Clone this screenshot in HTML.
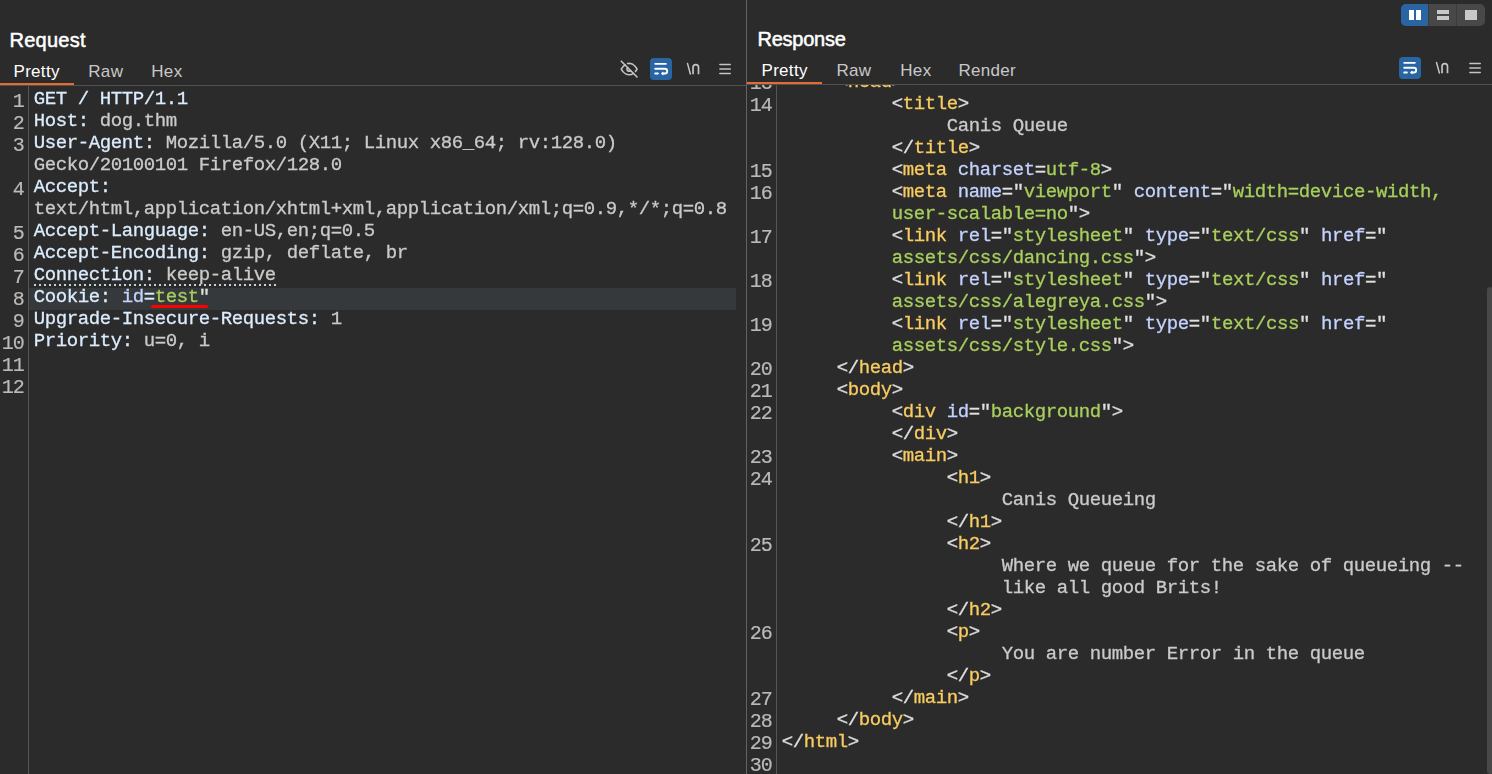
<!DOCTYPE html>
<html><head><meta charset="utf-8">
<style>
*{margin:0;padding:0;box-sizing:border-box}
html,body{width:1492px;height:774px;overflow:hidden;background:#2b2b2b}
body{position:relative;font-family:"Liberation Sans",sans-serif;color:#ddd}
.a{position:absolute}
.title{font-weight:normal;font-size:20px;color:#fff;line-height:20px;white-space:nowrap;-webkit-text-stroke:0.5px #fff}
.tab{font-size:17px;letter-spacing:0.3px;color:#c8c8c8;line-height:18px;white-space:nowrap}
.tab.sel{color:#fff}
.code{font-family:"Liberation Mono",monospace;font-size:19px;letter-spacing:-0.4px;line-height:22px;white-space:pre;color:#cacaca;-webkit-text-stroke:0.3px currentColor}
.ln{font-family:"Liberation Mono",monospace;font-size:20px;letter-spacing:-1px;line-height:22px;color:#bababa;text-align:right;white-space:pre;-webkit-text-stroke:0.2px currentColor}
.h{color:#dbecfd}
.t{color:#f8cc60}
.n{color:#c3d2ff}
.v{color:#a8cf5c}
.q{color:#e0e0e0}
.clip{position:absolute;overflow:hidden;will-change:transform}

</style></head><body>
<div class="a" style="left:746px;top:0;width:1px;height:774px;background:#636363"></div>

<div class="a title" style="left:9.5px;top:30px;letter-spacing:0.25px">Request</div>
<div class="a tab sel" style="left:13.5px;top:63px">Pretty</div>
<div class="a tab" style="left:88.3px;top:63px">Raw</div>
<div class="a tab" style="left:151.3px;top:63px">Hex</div>
<div class="a" style="left:0;top:83px;width:74px;height:2px;background:#e66b32"></div>
<div class="a" style="left:0;top:85px;width:746px;height:1px;background:#505050"></div>


<svg class="a" style="left:616px;top:56px" width="26" height="26" viewBox="0 0 26 26">
<g transform="translate(4.6 4.5) scale(0.715)" fill="none" stroke="#c4c4c4" stroke-width="2.25" stroke-linecap="round" stroke-linejoin="round">
<path d="M17.94 17.94A10.07 10.07 0 0 1 12 20c-7 0-11-8-11-8a18.45 18.45 0 0 1 5.06-5.94M9.9 4.24A9.12 9.12 0 0 1 12 4c7 0 11 8 11 8a18.5 18.5 0 0 1-2.16 3.19m-6.72-1.07a3 3 0 1 1-4.24-4.24"/>
<line x1="1" y1="1" x2="23" y2="23"/>
</g>
</svg>
<div class="a" style="left:650px;top:58px;width:22px;height:22px;border-radius:4px;background:#2965a3"></div>
<svg class="a" style="left:650px;top:58px" width="22" height="22" viewBox="0 0 22 22">
<g fill="none" stroke="#fff" stroke-width="1.85" stroke-linecap="round">
<line x1="5.2" y1="5.8" x2="15.9" y2="5.8"/>
<path d="M5.2 10.75 H14.8 A2.375 2.375 0 0 1 14.8 15.5 H12.6"/>
<line x1="5.2" y1="15.5" x2="7.9" y2="15.5"/>
</g>
<path d="M10.9 15.5 L13.4 13.6 L13.4 17.4 Z" fill="#fff"/>
</svg>
<svg class="a" style="left:682px;top:58px" width="54" height="22" viewBox="0 0 54 22">
<g fill="none" stroke="#c4c4c4" stroke-linecap="round">
<line x1="5.5" y1="5.4" x2="8.4" y2="16" stroke-width="1.5"/>
<path d="M11.04 16.2 V9.3 A2.73 2.73 0 0 1 16.5 9.3 V16.2" stroke-width="1.7" stroke-linecap="butt"/>
<line x1="37.9" y1="6.5" x2="48.2" y2="6.5" stroke-width="1.6"/>
<line x1="37.9" y1="11.04" x2="48.2" y2="11.04" stroke-width="1.6"/>
<line x1="37.9" y1="15.56" x2="48.2" y2="15.56" stroke-width="1.6"/>
</g>
</svg>

<div class="clip" style="left:0;top:86px;width:746px;height:688px">
<div class="a" style="left:28px;top:0;width:1px;height:688px;background:#555"></div>
<div class="a" style="left:29px;top:202px;width:707px;height:22px;background:#35393b"></div>
<div class="a ln" style="top:4.65px;left:0;width:23.8px">1</div>
<div class="a code" style="top:2.15px;left:33.7px"><span class="h">GET / HTTP/1.1</span></div>
<div class="a ln" style="top:26.65px;left:0;width:23.8px">2</div>
<div class="a code" style="top:24.15px;left:33.7px"><span class="h">Host</span><span class="h">:</span> dog.thm</div>
<div class="a ln" style="top:48.65px;left:0;width:23.8px">3</div>
<div class="a code" style="top:46.15px;left:33.7px"><span class="h">User-Agent</span><span class="h">:</span> Mozilla/5.0 (X11; Linux x86_64; rv:128.0)</div>
<div class="a code" style="top:68.15px;left:33.7px">Gecko/20100101 Firefox/128.0</div>
<div class="a ln" style="top:92.65px;left:0;width:23.8px">4</div>
<div class="a code" style="top:90.15px;left:33.7px"><span class="h">Accept</span><span class="h">:</span></div>
<div class="a code" style="top:112.15px;left:33.7px">text/html,application/xhtml+xml,application/xml;q=0.9,*/*;q=0.8</div>
<div class="a ln" style="top:136.65px;left:0;width:23.8px">5</div>
<div class="a code" style="top:134.15px;left:33.7px"><span class="h">Accept-Language</span><span class="h">:</span> en-US,en;q=0.5</div>
<div class="a ln" style="top:158.65px;left:0;width:23.8px">6</div>
<div class="a code" style="top:156.15px;left:33.7px"><span class="h">Accept-Encoding</span><span class="h">:</span> gzip, deflate, br</div>
<div class="a ln" style="top:180.65px;left:0;width:23.8px">7</div>
<div class="a code" style="top:178.15px;left:33.7px"><span class="h">Connection</span><span class="h">:</span> keep-alive</div>
<div class="a ln" style="top:202.65px;left:0;width:23.8px">8</div>
<div class="a code" style="top:200.15px;left:33.7px"><span class="h">Cookie</span><span class="h">:</span> <span class="n">id</span><span class="h">=</span><span class="v">test</span><span class="q">&quot;</span></div>
<div class="a ln" style="top:224.65px;left:0;width:23.8px">9</div>
<div class="a code" style="top:222.15px;left:33.7px"><span class="h">Upgrade-Insecure-Requests</span><span class="h">:</span> 1</div>
<div class="a ln" style="top:246.65px;left:0;width:23.8px">10</div>
<div class="a code" style="top:244.15px;left:33.7px"><span class="h">Priority</span><span class="h">:</span> u=0, i</div>
<div class="a ln" style="top:268.65px;left:0;width:23.8px">11</div>
<div class="a ln" style="top:290.65px;left:0;width:23.8px">12</div>
<div class="a" style="left:34px;top:198px;width:243px;height:2px;background-image:linear-gradient(90deg,#c4d2e0 0,#c4d2e0 2px,transparent 2px);background-size:5px 2px"></div>
<div class="a" style="left:151px;top:219px;width:57px;height:3px;border-radius:1.5px;background:#f00"></div>
</div>

<div class="a title" style="left:757.5px;top:29px;letter-spacing:-0.25px">Response</div>
<div class="a tab sel" style="left:761.5px;top:62px">Pretty</div>
<div class="a tab" style="left:836.5px;top:62px">Raw</div>
<div class="a tab" style="left:900.3px;top:62px">Hex</div>
<div class="a tab" style="left:958.5px;top:62px">Render</div>
<div class="a" style="left:747px;top:82px;width:75px;height:2px;background:#e66b32"></div>
<div class="a" style="left:747px;top:84px;width:745px;height:1px;background:#505050"></div>


<div class="a" style="left:1399px;top:57px;width:22px;height:22px;border-radius:4px;background:#2965a3"></div>
<svg class="a" style="left:1399px;top:57px" width="22" height="22" viewBox="0 0 22 22">
<g fill="none" stroke="#fff" stroke-width="1.85" stroke-linecap="round">
<line x1="5.2" y1="5.8" x2="15.9" y2="5.8"/>
<path d="M5.2 10.75 H14.8 A2.375 2.375 0 0 1 14.8 15.5 H12.6"/>
<line x1="5.2" y1="15.5" x2="7.9" y2="15.5"/>
</g>
<path d="M10.9 15.5 L13.4 13.6 L13.4 17.4 Z" fill="#fff"/>
</svg>
<svg class="a" style="left:1430.8px;top:57px" width="54" height="22" viewBox="0 0 54 22">
<g fill="none" stroke="#c4c4c4" stroke-linecap="round">
<line x1="5.5" y1="5.4" x2="8.4" y2="16" stroke-width="1.5"/>
<path d="M11.04 16.2 V9.3 A2.73 2.73 0 0 1 16.5 9.3 V16.2" stroke-width="1.7" stroke-linecap="butt"/>
<line x1="38.9" y1="6.5" x2="49.2" y2="6.5" stroke-width="1.6"/>
<line x1="38.9" y1="11.04" x2="49.2" y2="11.04" stroke-width="1.6"/>
<line x1="38.9" y1="15.56" x2="49.2" y2="15.56" stroke-width="1.6"/>
</g>
</svg>
<div class="a" style="left:1401px;top:4px;width:84px;height:22px;border-radius:5px;background:#484848;overflow:hidden">
<div class="a" style="left:0;top:0;width:27px;height:22px;background:#2965a3"></div>
<div class="a" style="left:27px;top:0;width:1px;height:22px;background:#3c3c3c"></div>
<div class="a" style="left:55px;top:0;width:1px;height:22px;background:#3c3c3c"></div>
<div class="a" style="left:8px;top:6px;width:5px;height:10px;background:#fff"></div>
<div class="a" style="left:15px;top:6px;width:5px;height:10px;background:#fff"></div>
<div class="a" style="left:36px;top:6px;width:12px;height:4px;background:#c8c8c8"></div>
<div class="a" style="left:36px;top:12px;width:12px;height:4px;background:#c8c8c8"></div>
<div class="a" style="left:64px;top:6px;width:12px;height:10px;background:#c8c8c8"></div>
</div>
<div class="a" style="left:1487px;top:287px;width:6px;height:487px;border-radius:3px;background:#484848"></div>

<div class="clip" style="left:747px;top:85px;width:745px;height:689px">
<div class="a" style="left:29px;top:0;width:1px;height:689px;background:#555"></div>
<div class="a ln" style="top:-11.8px;left:0;width:24.7px">13</div>
<div class="a code" style="top:-14.3px;left:34.7px"><span class="q">     &lt;</span><span class="t">head</span><span class="q">&gt;</span></div>
<div class="a ln" style="top:10.2px;left:0;width:24.7px">14</div>
<div class="a code" style="top:7.699999999999999px;left:34.7px"><span class="q">          &lt;</span><span class="t">title</span><span class="q">&gt;</span></div>
<div class="a code" style="top:29.7px;left:34.7px">               Canis Queue</div>
<div class="a code" style="top:51.7px;left:34.7px"><span class="q">          &lt;/</span><span class="t">title</span><span class="q">&gt;</span></div>
<div class="a ln" style="top:76.2px;left:0;width:24.7px">15</div>
<div class="a code" style="top:73.7px;left:34.7px"><span class="q">          &lt;</span><span class="t">meta</span> <span class="n">charset</span><span class="q">=</span><span class="v">utf-8</span><span class="q">&gt;</span></div>
<div class="a ln" style="top:98.2px;left:0;width:24.7px">16</div>
<div class="a code" style="top:95.7px;left:34.7px"><span class="q">          &lt;</span><span class="t">meta</span> <span class="n">name</span><span class="q">=&quot;</span><span class="v">viewport</span><span class="q">&quot;</span> <span class="n">content</span><span class="q">=&quot;</span><span class="v">width=device-width,</span></div>
<div class="a code" style="top:117.7px;left:34.7px"><span class="v">          user-scalable=no</span><span class="q">&quot;&gt;</span></div>
<div class="a ln" style="top:142.2px;left:0;width:24.7px">17</div>
<div class="a code" style="top:139.7px;left:34.7px"><span class="q">          &lt;</span><span class="t">link</span> <span class="n">rel</span><span class="q">=&quot;</span><span class="v">stylesheet</span><span class="q">&quot;</span> <span class="n">type</span><span class="q">=&quot;</span><span class="v">text/css</span><span class="q">&quot;</span> <span class="n">href</span><span class="q">=&quot;</span></div>
<div class="a code" style="top:161.7px;left:34.7px"><span class="v">          assets/css/dancing.css</span><span class="q">&quot;&gt;</span></div>
<div class="a ln" style="top:186.2px;left:0;width:24.7px">18</div>
<div class="a code" style="top:183.7px;left:34.7px"><span class="q">          &lt;</span><span class="t">link</span> <span class="n">rel</span><span class="q">=&quot;</span><span class="v">stylesheet</span><span class="q">&quot;</span> <span class="n">type</span><span class="q">=&quot;</span><span class="v">text/css</span><span class="q">&quot;</span> <span class="n">href</span><span class="q">=&quot;</span></div>
<div class="a code" style="top:205.7px;left:34.7px"><span class="v">          assets/css/alegreya.css</span><span class="q">&quot;&gt;</span></div>
<div class="a ln" style="top:230.2px;left:0;width:24.7px">19</div>
<div class="a code" style="top:227.7px;left:34.7px"><span class="q">          &lt;</span><span class="t">link</span> <span class="n">rel</span><span class="q">=&quot;</span><span class="v">stylesheet</span><span class="q">&quot;</span> <span class="n">type</span><span class="q">=&quot;</span><span class="v">text/css</span><span class="q">&quot;</span> <span class="n">href</span><span class="q">=&quot;</span></div>
<div class="a code" style="top:249.7px;left:34.7px"><span class="v">          assets/css/style.css</span><span class="q">&quot;&gt;</span></div>
<div class="a ln" style="top:274.2px;left:0;width:24.7px">20</div>
<div class="a code" style="top:271.7px;left:34.7px"><span class="q">     &lt;/</span><span class="t">head</span><span class="q">&gt;</span></div>
<div class="a ln" style="top:296.2px;left:0;width:24.7px">21</div>
<div class="a code" style="top:293.7px;left:34.7px"><span class="q">     &lt;</span><span class="t">body</span><span class="q">&gt;</span></div>
<div class="a ln" style="top:318.2px;left:0;width:24.7px">22</div>
<div class="a code" style="top:315.7px;left:34.7px"><span class="q">          &lt;</span><span class="t">div</span> <span class="n">id</span><span class="q">=&quot;</span><span class="v">background</span><span class="q">&quot;&gt;</span></div>
<div class="a code" style="top:337.7px;left:34.7px"><span class="q">          &lt;/</span><span class="t">div</span><span class="q">&gt;</span></div>
<div class="a ln" style="top:362.2px;left:0;width:24.7px">23</div>
<div class="a code" style="top:359.7px;left:34.7px"><span class="q">          &lt;</span><span class="t">main</span><span class="q">&gt;</span></div>
<div class="a ln" style="top:384.2px;left:0;width:24.7px">24</div>
<div class="a code" style="top:381.7px;left:34.7px"><span class="q">               &lt;</span><span class="t">h1</span><span class="q">&gt;</span></div>
<div class="a code" style="top:403.7px;left:34.7px">                    Canis Queueing</div>
<div class="a code" style="top:425.7px;left:34.7px"><span class="q">               &lt;/</span><span class="t">h1</span><span class="q">&gt;</span></div>
<div class="a ln" style="top:450.2px;left:0;width:24.7px">25</div>
<div class="a code" style="top:447.7px;left:34.7px"><span class="q">               &lt;</span><span class="t">h2</span><span class="q">&gt;</span></div>
<div class="a code" style="top:469.7px;left:34.7px">                    Where we queue for the sake of queueing --</div>
<div class="a code" style="top:491.7px;left:34.7px">                    like all good Brits!</div>
<div class="a code" style="top:513.7px;left:34.7px"><span class="q">               &lt;/</span><span class="t">h2</span><span class="q">&gt;</span></div>
<div class="a ln" style="top:538.2px;left:0;width:24.7px">26</div>
<div class="a code" style="top:535.7px;left:34.7px"><span class="q">               &lt;</span><span class="t">p</span><span class="q">&gt;</span></div>
<div class="a code" style="top:557.7px;left:34.7px">                    You are number Error in the queue</div>
<div class="a code" style="top:579.7px;left:34.7px"><span class="q">               &lt;/</span><span class="t">p</span><span class="q">&gt;</span></div>
<div class="a ln" style="top:604.2px;left:0;width:24.7px">27</div>
<div class="a code" style="top:601.7px;left:34.7px"><span class="q">          &lt;/</span><span class="t">main</span><span class="q">&gt;</span></div>
<div class="a ln" style="top:626.2px;left:0;width:24.7px">28</div>
<div class="a code" style="top:623.7px;left:34.7px"><span class="q">     &lt;/</span><span class="t">body</span><span class="q">&gt;</span></div>
<div class="a ln" style="top:648.2px;left:0;width:24.7px">29</div>
<div class="a code" style="top:645.7px;left:34.7px"><span class="q">&lt;/</span><span class="t">html</span><span class="q">&gt;</span></div>
<div class="a ln" style="top:670.2px;left:0;width:24.7px">30</div>
</div>

</body></html>
